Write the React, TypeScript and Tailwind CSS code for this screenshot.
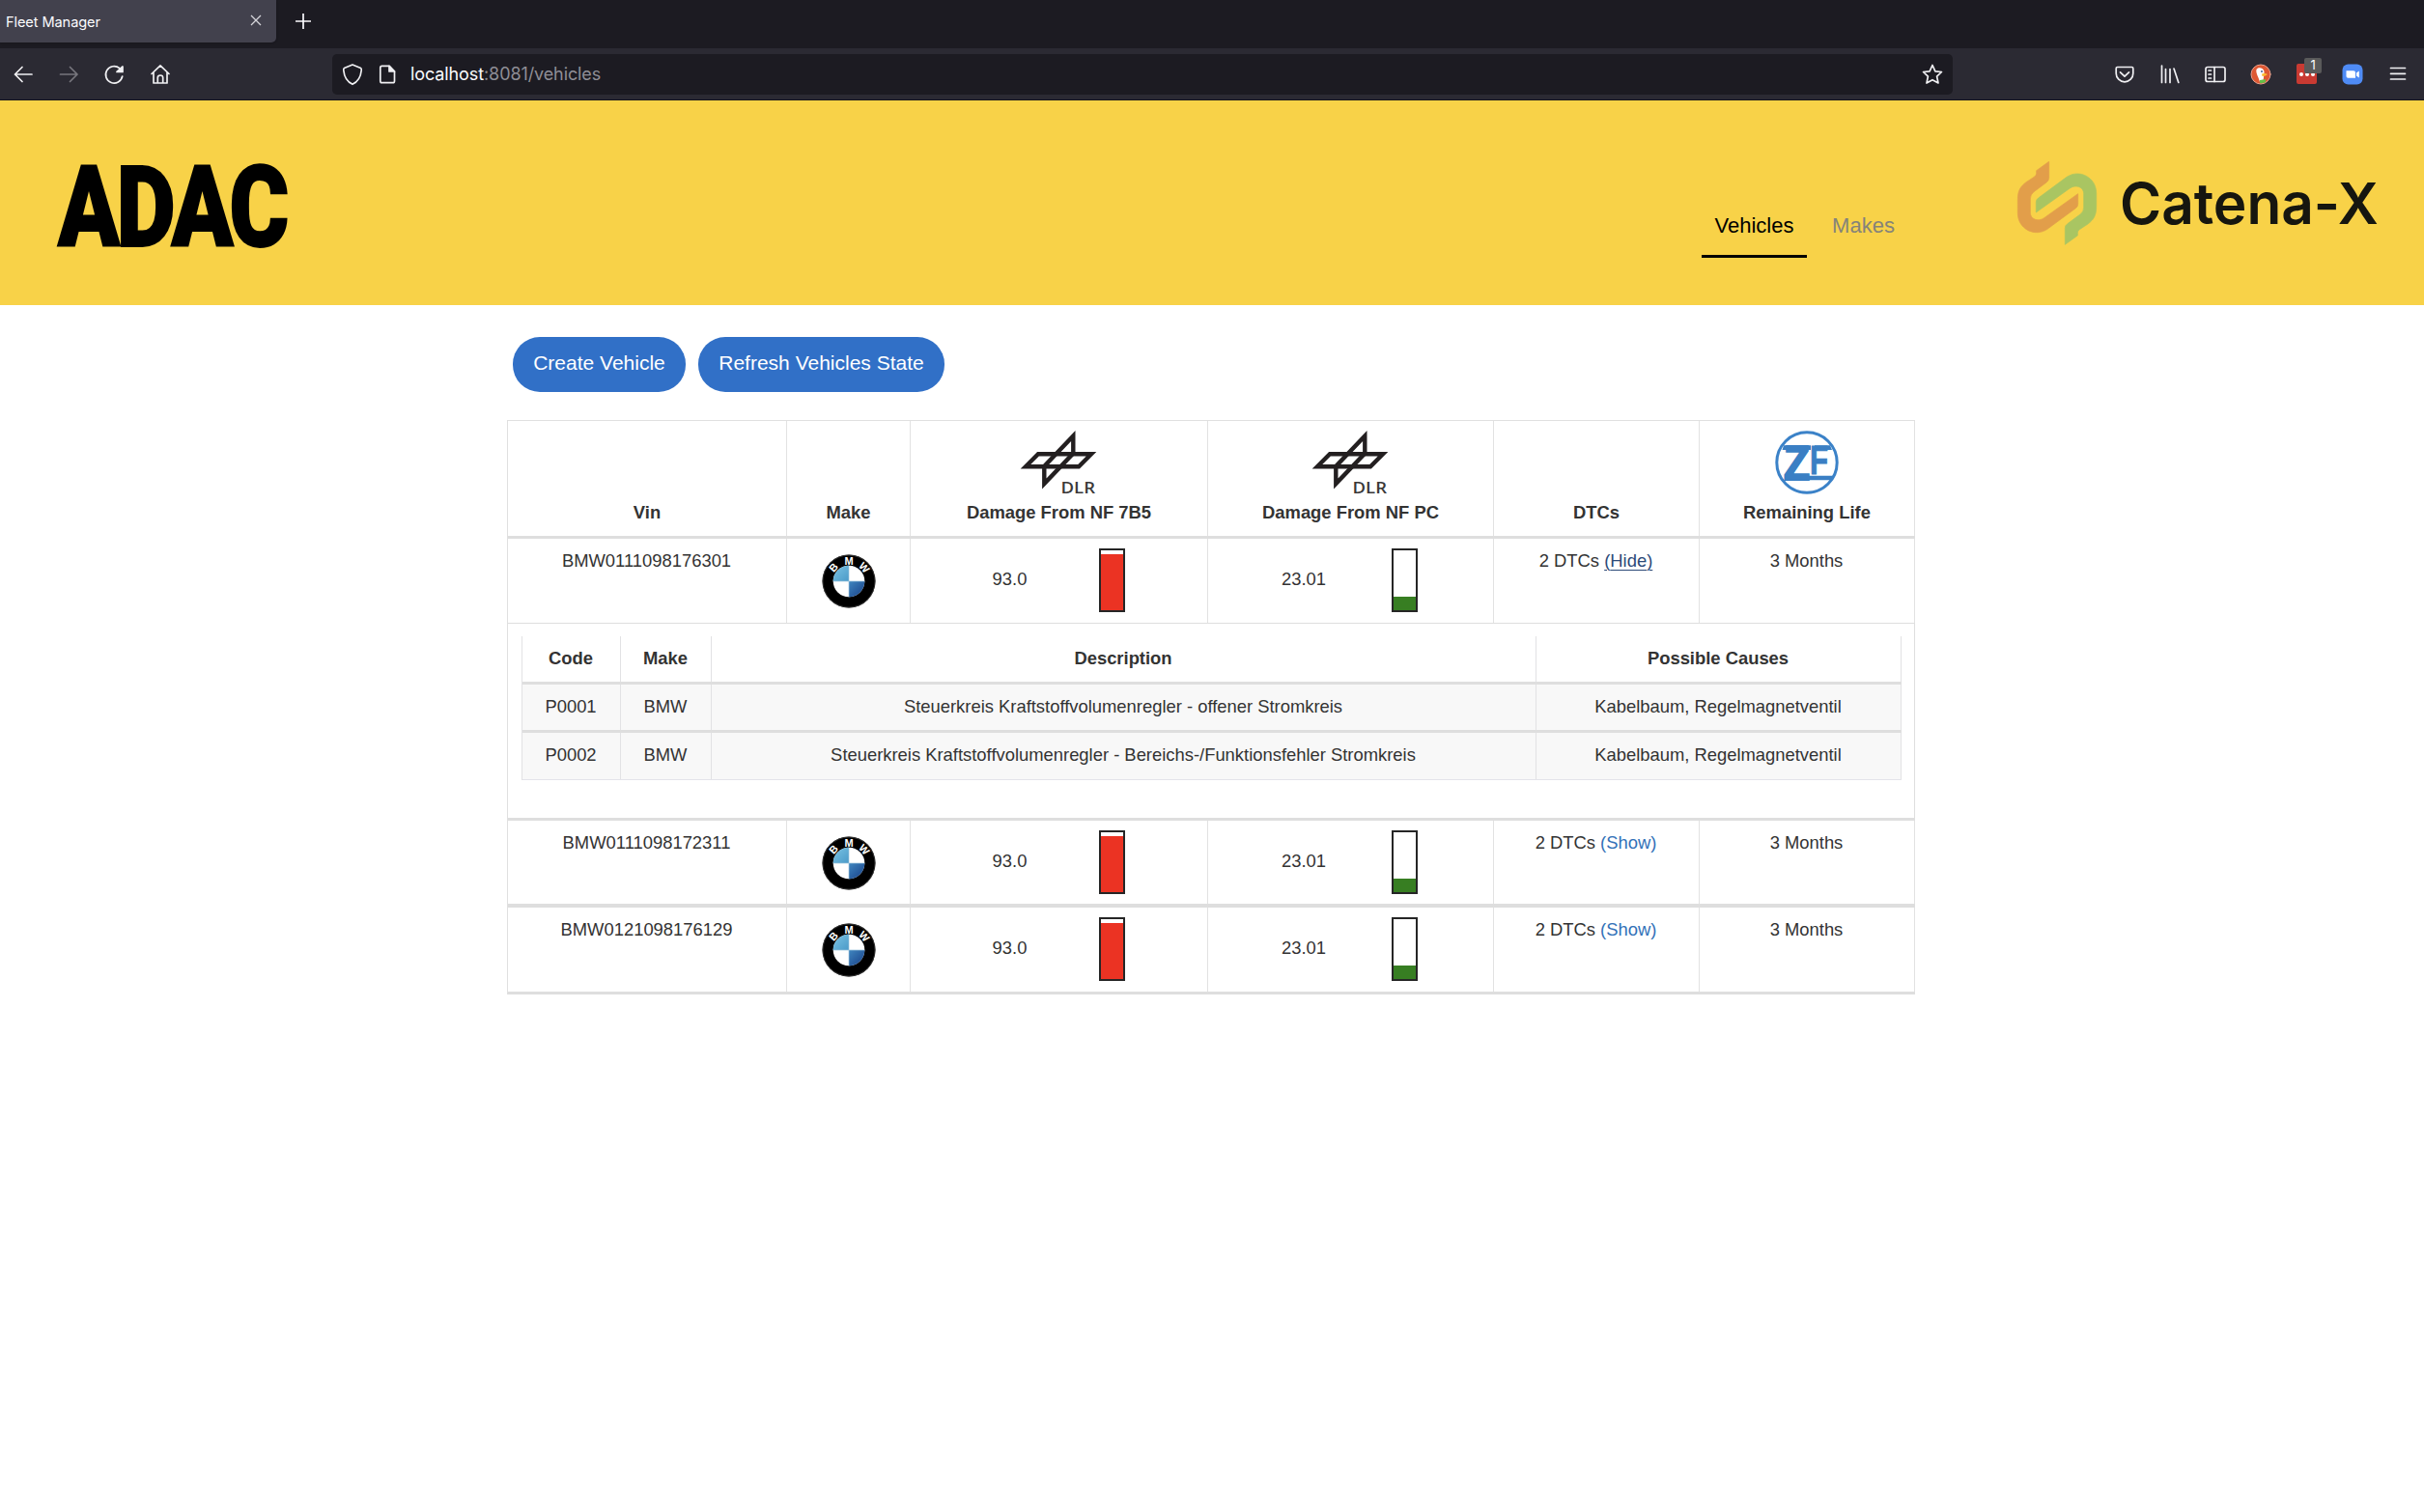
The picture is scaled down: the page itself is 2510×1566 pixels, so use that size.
import type { ReactNode } from "react";

const SANS = "font-['Liberation_Sans',Arial,sans-serif]";

function Icon({ children, dim }: { children: ReactNode; dim?: boolean }) {
  return (
    <span className="flex w-[47.3px] shrink-0 justify-center">
      <svg
        width="26"
        height="26"
        viewBox="-13 -13 26 26"
        fill="none"
        stroke={dim ? "#77767d" : "#f0f0f3"}
        strokeWidth="1.7"
        strokeLinecap="round"
        strokeLinejoin="round"
        className="overflow-visible"
      >
        {children}
      </svg>
    </span>
  );
}

function Browser() {
  return (
    <div className="font-[Inter,sans-serif] text-[#fbfbfe]">
      <div className="flex h-[50px] bg-[#1c1b22]">
        <div className="flex h-[44px] w-[286px] items-center justify-between rounded-br-[5px] bg-[#42414d] pr-[15px] pl-[6px] shadow">
          <span className="pt-[1px] text-[14.600px] leading-5 tracking-[-0.1px]">Fleet Manager</span>
          <svg width="12" height="12" viewBox="0 0 12 12" stroke="#d5d5da" strokeWidth="1.3" className="-mt-[2px]">
            <path d="M1 1l10 10M11 1L1 11" />
          </svg>
        </div>
        <svg width="16" height="16" viewBox="0 0 16 16" stroke="#fbfbfe" strokeWidth="1.7" className="mt-[14px] ml-[20px]">
          <path d="M0 8h16M8 0v16" />
        </svg>
      </div>
      <div className="flex h-[54px] items-center border-b border-[#15141a] bg-[#2b2a33]">
        <div className="flex w-[344px]">
          <Icon>
            <path d="M9 0H-8.500M-1 -7.500L-8.500 0L-1 7.500" />
          </Icon>
          <Icon dim>
            <path d="M-8.500 0H9M1.500 -7.500L9 0L1.500 7.500" />
          </Icon>
          <Icon>
            <path d="M8.700 2A8.700 8.700 0 1 1 5.800 -6.300" />
            <path d="M9 -8V-2.500H3Z" fill="#f0f0f3" />
          </Icon>
          <Icon>
            <path d="M-9 -0.500L0 -9.200L9 -0.500M-7 -2V9H7V-2M-2.700 9V3.500Q-2.700 1 0 1Q2.700 1 2.700 3.500V9" />
          </Icon>
        </div>
        <div className="flex h-[42px] w-[1678px] items-center rounded-[5px] bg-[#1c1b22] pr-[8px] pl-[8px]">
          <svg width="26" height="26" viewBox="-13 -13 26 26" fill="none" stroke="#f0f0f3" strokeWidth="1.7" strokeLinejoin="round">
            <path d="M0 -10L8.500 -6.500Q9.500 -6 9.200 -4C8.500 3 5 8 0 10.300C-5 8 -8.500 3 -9.200 -4Q-9.500 -6 -8.500 -6.500Z" />
          </svg>
          <svg width="26" height="26" viewBox="-13 -13 26 26" fill="none" stroke="#f0f0f3" strokeWidth="1.7" strokeLinejoin="round" className="ml-[10px]">
            <path d="M-5.500 -8.700H2L7.500 -3V7Q7.500 8.700 5.800 8.700H-5.500Q-7.200 8.700 -7.200 7V-7Q-7.200 -8.700 -5.500 -8.700Z" />
            <path d="M2 -8.700V-3H7.500Z" fill="#f0f0f3" />
          </svg>
          <span className="ml-[11px] text-[18px] leading-6 tracking-[-0.1px] text-[#fbfbfe]">
            localhost<span className="text-[#8f8e96]">:8081/vehicles</span>
          </span>
          <svg width="26" height="26" viewBox="-13 -13 26 26" fill="none" stroke="#f0f0f3" strokeWidth="1.7" strokeLinejoin="round" className="ml-auto">
            <path d="M0 -9.500L2.900 -3.200L9.500 -2.500L4.600 2.200L6 9L0 5.700L-6 9L-4.600 2.200L-9.500 -2.500L-2.900 -3.200Z" />
          </svg>
        </div>
        <div className="ml-auto flex pr-[3px]">
          <Icon>
            <path d="M-7.500 -7.500H7.500Q8.800 -7.500 8.800 -6V-1A8.800 8.800 0 0 1 -8.800 -1V-6Q-8.800 -7.500 -7.500 -7.500ZM-4.500 -2.200L0 2.200L4.500 -2.200" />
          </Icon>
          <Icon>
            <path d="M-8.500 -9V8.500M-4.500 -5.500V8.500M0 -5.500V8.500M4 -6L8.800 8.500" />
          </Icon>
          <Icon>
            <rect x="-10" y="-7.500" width="20" height="15" rx="2" />
            <path d="M-1 -7.500V7.500M-7 -4H-4.500M-7 0H-4.500M-7 4H-4.500" />
          </Icon>
          <Icon>
            <circle r="10" fill="#de5833" stroke="#e8a08c" strokeWidth="1" />
            <g stroke="none">
              <path d="M-4.500 -5C-3 -8 3 -7 3.500 -3C4 1 2 4 3 8H-1C-2 3 -5.500 -1 -4.500 -5Z" fill="#fff" />
              <path d="M1 -0.500Q4 -1.500 7 0Q5 2 1.500 2Z" fill="#fdbb2d" />
              <path d="M-1 6L5 5V8Q2 9.500 -1 9Z" fill="#67bd47" />
              <circle cx="1" cy="-3" r="0.900" fill="#2d4f8e" />
            </g>
          </Icon>
          <span className="relative flex w-[47.3px] items-center justify-center">
            <span className="flex h-[21px] w-[21px] items-center justify-center gap-[2px] rounded-[2px] bg-[#c93a32]">
              <i className="h-[4px] w-[4px] rounded-full bg-white" />
              <i className="h-[4px] w-[4px] rounded-full bg-white" />
              <i className="h-[4px] w-[4px] rounded-full bg-white" />
            </span>
            <span className="absolute -top-[4px] left-[21px] flex h-[16px] w-[18px] items-center justify-center rounded-[2px] bg-[#5a5a5a] text-[13px] leading-none">
              1
            </span>
          </span>
          <Icon>
            <rect x="-10.500" y="-10.500" width="21" height="21" rx="6" fill="#4f8bf5" stroke="none" />
            <path d="M-6.500 -3.700H1Q3 -3.700 3 -2V3.700H-4.500Q-6.500 3.700 -6.500 2ZM4 -1.500L6.800 -3.500V3.500L4 1.500Z" fill="#fff" stroke="none" />
          </Icon>
          <Icon>
            <path d="M-7.500 -6.500H7.500M-7.500 -0.700H7.500M-7.500 5H7.500" />
          </Icon>
        </div>
      </div>
    </div>
  );
}

function Header() {
  const chain =
    "M155 52V103Q155 112 146 118L108 146Q97 155 97 168V210C97 232 122 240 140 227L245 152V185Q245 192 238 197L150 262C112 288 58 262 58 212V170C58 142 66 130 84 116L110 99Q116 95 116 88V80Z";
  return (
    <header className={`flex h-[212px] bg-[#f8d248] ${SANS}`}>
      <svg width="260" height="110" className="mt-[58px] ml-[50px] overflow-visible" aria-label="ADAC">
        <text
          x="10"
          y="93"
          fontFamily="Roboto, sans-serif"
          fontWeight="900"
          fontSize="117"
          stroke="#000"
          strokeWidth="2"
          letterSpacing="-4"
          textLength="236"
          lengthAdjust="spacingAndGlyphs"
        >
          ADAC
        </text>
      </svg>
      <nav className="mt-[113px] ml-auto flex h-[50px] text-[22px] leading-[34px]">
        <a className="h-[50px] w-[109px] border-b-[3px] border-black text-center text-black">Vehicles</a>
        <a className="ml-[13px] w-[91px] text-center text-[#85837a]">Makes</a>
      </nav>
      <div className="mt-[46px] ml-[95px] flex w-[440px]">
        <svg width="120" height="120" viewBox="0 0 360 360">
          <path d={chain} fill="#e29e4a" stroke="#e29e4a" strokeWidth="2" />
          <path d={chain} fill="#a9c562" stroke="#a9c562" strokeWidth="2" transform="rotate(180 180 181)" />
        </svg>
        <svg width="300" height="120" aria-label="Catena-X">
          <text
            x="5"
            y="82"
            fontFamily="Inter, sans-serif"
            fontWeight="600"
            fontSize="59"
            fill="#16160f"
            textLength="268"
            lengthAdjust="spacingAndGlyphs"
          >
            Catena-X
          </text>
        </svg>
      </div>
    </header>
  );
}

function DlrLogo() {
  return (
    <svg width="100" height="83" viewBox="0 0 100 83" className="relative -left-px shrink-0">
      <g fill="none" stroke="#231f20" strokeWidth="4.400" strokeMiterlimit="10">
        <path d="M16 47.200L29 34.200H84L71 47.200Z" />
        <path d="M65.300 15.500V33.500L35.300 65V47Z" />
      </g>
      <text x="52.500" y="75" fontFamily="Open Sans, sans-serif" fontWeight="600" fontSize="16.800" fill="#3a3838" textLength="35.500" lengthAdjust="spacingAndGlyphs">
        DLR
      </text>
    </svg>
  );
}

function ZfLogo() {
  return (
    <svg width="100" height="83" viewBox="0 0 100 83" className="shrink-0">
      <circle cx="50" cy="43" r="31.200" fill="none" stroke="#3b82c8" strokeWidth="3" />
      <g fill="#3a7fc4">
        <path d="M26 25.300H54V30H24.500ZM58 25.300H74L76 30H58ZM30 56.700H77L75 61.300H28Z" />
        <text x="26" y="60.500" fontFamily="Liberation Sans, sans-serif" fontWeight="700" fontSize="49.500" textLength="27" lengthAdjust="spacingAndGlyphs" stroke="#3a7fc4" strokeWidth="2">
          Z
        </text>
        <text x="53" y="54.500" fontFamily="Liberation Sans, sans-serif" fontWeight="700" fontSize="42" textLength="19" lengthAdjust="spacingAndGlyphs" stroke="#3a7fc4" strokeWidth="1">
          F
        </text>
      </g>
    </svg>
  );
}

function BmwLogo() {
  return (
    <svg width="56" height="56" viewBox="-28 -28 56 56">
      <defs>
        <linearGradient id="bmwLight" x1="0" y1="0" x2="1" y2="1">
          <stop offset="0" stopColor="#7cc4e4" />
          <stop offset="1" stopColor="#4a9ac8" />
        </linearGradient>
        <linearGradient id="bmwDark" x1="0" y1="0" x2="1" y2="1">
          <stop offset="0" stopColor="#3f86c0" />
          <stop offset="1" stopColor="#173f86" />
        </linearGradient>
      </defs>
      <circle r="27.500" fill="#000" />
      <circle r="27" fill="none" stroke="#444" strokeWidth="0.800" />
      <circle r="16.300" fill="#fff" />
      <path d="M0 0H-16.300A16.300 16.300 0 0 1 0 -16.300Z" fill="url(#bmwLight)" />
      <path d="M0 0H16.300A16.300 16.300 0 0 1 0 16.300Z" fill="url(#bmwDark)" />
      <path d="M-16.300 0H16.300M0 -16.300V16.300" stroke="#9cc4dc" strokeWidth="0.700" />
      <g fontFamily="Liberation Sans, sans-serif" fontWeight="700" fontSize="11" fill="#fff" textAnchor="middle">
        <text y="-17.500" transform="rotate(-48)">B</text>
        <text y="-17.500">M</text>
        <text y="-17.500" transform="rotate(48)">W</text>
      </g>
    </svg>
  );
}

function Gauge({ label, fill, color, left }: { label: string; fill: number; color: string; left: string }) {
  return (
    <div className="flex h-full items-start border-r border-[#e2e2e2] pt-[10px]">
      <span className={`shrink-0 pt-[20px] text-center leading-6 ${left}`}>{label}</span>
      <span className="flex h-[66px] w-[27px] shrink-0 flex-col justify-end border-2 border-black/85 bg-white">
        <span className={color} style={{ height: `${fill}px` }} />
      </span>
    </div>
  );
}

const COLS = "grid grid-cols-[289px_128px_308px_296px_213px_223px]";
const TOPCELL = "border-r border-[#e2e2e2] text-center pt-[11px] pr-[1px] leading-6";

function VehicleRow({ vin, action, open, className }: { vin: string; action: string; open?: boolean; className: string }) {
  return (
    <div className={`${COLS} ${className}`}>
      <div className={TOPCELL}>{vin}</div>
      <div className="flex items-start justify-center border-r border-[#e2e2e2] pt-[16px]">
        <BmwLogo />
      </div>
      <Gauge label="93.0" fill={58} color="bg-[#eb3323]" left="w-[205px] mr-[-10.500px]" />
      <Gauge label="23.01" fill={14} color="bg-[#377e22]" left="w-[198px] mr-[-8px]" />
      <div className={TOPCELL}>
        2 DTCs{" "}
        <a className={open ? "text-[#2c4a78] underline decoration-1 underline-offset-[3px]" : "text-[#3371b8]"}>({action})</a>
      </div>
      <div className={TOPCELL}>3 Months</div>
    </div>
  );
}

function HeadCell({ title, logo }: { title: string; logo?: ReactNode }) {
  return (
    <div className="flex flex-col items-center justify-end border-r border-[#e2e2e2] pb-[12px]">
      {logo}
      <span className="leading-6">{title}</span>
    </div>
  );
}

const INNER = "grid grid-cols-[102px_94px_854px_378px] text-center leading-6";
const INCELL = "border-r border-[#e2e2e4] pt-[11px] pr-[1px]";

const CODES = [
  ["P0001", "BMW", "Steuerkreis Kraftstoffvolumenregler - offener Stromkreis", "Kabelbaum, Regelmagnetventil"],
  ["P0002", "BMW", "Steuerkreis Kraftstoffvolumenregler - Bereichs-/Funktionsfehler Stromkreis", "Kabelbaum, Regelmagnetventil"],
];

export default function App() {
  return (
    <div className="min-h-[1566px] w-[2510px] bg-white">
      <Browser />
      <Header />
      <main className={`pt-[33px] pl-[525px] text-[#333] ${SANS}`}>
        <div className="flex gap-[13px] pl-[6px] text-[21px] text-white">
          <button className="h-[57px] w-[179px] rounded-[28px] bg-[#3170c7] pb-[4px]">Create Vehicle</button>
          <button className="h-[57px] w-[255px] rounded-[28px] bg-[#3170c7] pb-[4px]">Refresh Vehicles State</button>
        </div>
        <div className="mt-[29px] w-[1458px] border-t border-l border-[#e0e0e0] text-[18.400px]">
          <div className={`${COLS} h-[122px] border-b-[3px] border-[#dedede] font-bold`}>
            <HeadCell title="Vin" />
            <HeadCell title="Make" />
            <HeadCell title="Damage From NF 7B5" logo={<DlrLogo />} />
            <HeadCell title="Damage From NF PC" logo={<DlrLogo />} />
            <HeadCell title="DTCs" />
            <HeadCell title="Remaining Life" logo={<ZfLogo />} />
          </div>
          <VehicleRow vin="BMW0111098176301" action="Hide" open className="h-[88px] border-b border-[#dedede]" />
          <div className="h-[204px] border-r border-b-[3px] border-[#dedede] pt-[13px] pl-[14px]">
            <div className="w-[1429px] border-l border-[#e2e2e4]">
              <div className={`${INNER} h-[50px] border-b-[3px] border-[#dedede] font-bold`}>
                {["Code", "Make", "Description", "Possible Causes"].map((t) => (
                  <div key={t} className={INCELL}>{t}</div>
                ))}
              </div>
              {CODES.map((row, i) => (
                <div
                  key={row[0]}
                  className={`${INNER} bg-[#f8f8f8] ${i === 0 ? "h-[50px] border-b-[3px] border-[#dedede]" : "h-[49px] border-b border-[#e4e4ea]"}`}
                >
                  {row.map((t, j) => (
                    <div key={j} className={INCELL}>{t}</div>
                  ))}
                </div>
              ))}
            </div>
          </div>
          <VehicleRow vin="BMW0111098172311" action="Show" className="h-[90px] border-b-4 border-[#dedede]" />
          <VehicleRow vin="BMW0121098176129" action="Show" className="h-[90px] border-b-[3px] border-[#dedede]" />
        </div>
      </main>
    </div>
  );
}
